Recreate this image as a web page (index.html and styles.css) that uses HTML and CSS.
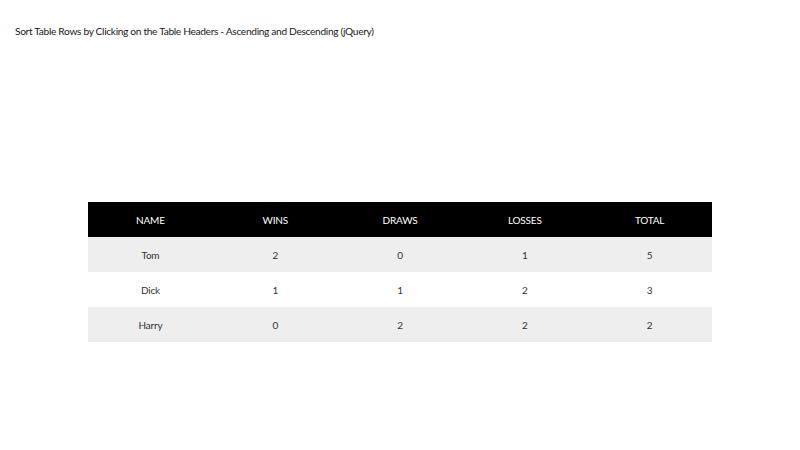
FILE: index.html
```html
<!DOCTYPE html>
<html>
<head>
<meta charset="utf-8">
<link rel="stylesheet" href="styles.css">
</head>
<body>
<p class="title">Sort Table Rows by Clicking on the Table Headers - Ascending and Descending (jQuery)</p>
<table class="scores">
  <thead>
    <tr><th>Name</th><th>Wins</th><th>Draws</th><th>Losses</th><th>Total</th></tr>
  </thead>
  <tbody>
    <tr><td>Tom</td><td>2</td><td>0</td><td>1</td><td>5</td></tr>
    <tr><td>Dick</td><td>1</td><td>1</td><td>2</td><td>3</td></tr>
    <tr><td>Harry</td><td>0</td><td>2</td><td>2</td><td>2</td></tr>
  </tbody>
</table>
</body>
</html>
```
FILE: styles.css
```css
html, body {
  margin: 0;
  padding: 0;
  background: #fff;
}
body {
  font-family: "Lato", "Noto Sans", sans-serif;
  color: #222;
  padding: 0 15px;
}
.title {
  margin: 0;
  padding-top: 24px;
  font-size: 10.2px;
  line-height: 15px;
  letter-spacing: -0.33px;
  color: #1a1a1a;
}
.scores {
  width: 624px;
  margin: 163px auto 0;
  border-collapse: collapse;
  table-layout: fixed;
  font-size: 10px;
  letter-spacing: -0.2px;
}
.scores th, .scores td {
  height: 35px;
  padding: 0;
  text-align: center;
  vertical-align: middle;
}
.scores th {
  background: #000;
  color: #fff;
  font-weight: normal;
  text-transform: uppercase;
}
.scores td {
  color: #333;
}
.scores tbody tr:nth-child(odd) {
  background: #eeeeee;
}
.scores tbody tr:nth-child(even) {
  background: #fff;
}
```
